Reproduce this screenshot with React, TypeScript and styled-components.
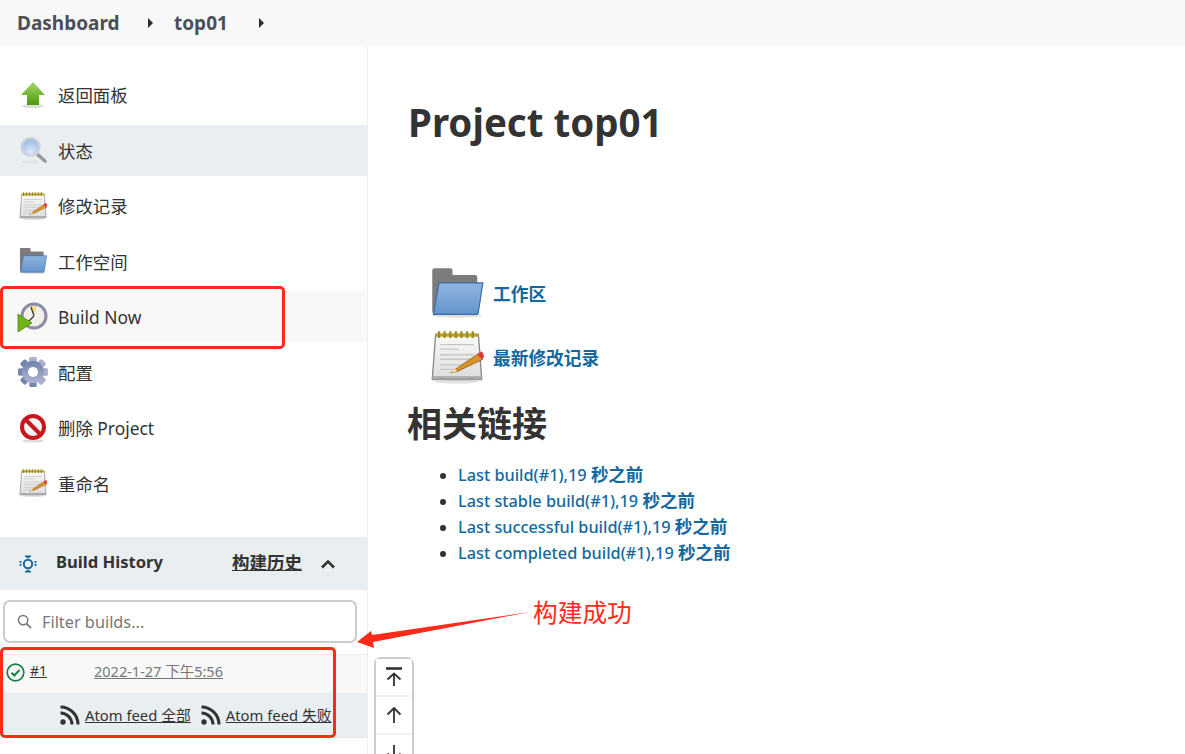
import React from "react";
import styled, { createGlobalStyle } from "styled-components";

const GlobalStyle = createGlobalStyle`
  html, body {
    margin: 0;
    padding: 0;
    height: 754px;
    overflow: hidden;
    background: #fff;
    font-family: "Noto Sans", "Noto Sans CJK SC", sans-serif;
    color: #333;
  }
`;

const Page = styled.div`
  position: relative;
  width: 1185px;
  height: 754px;
  overflow: hidden;
`;

const Breadcrumb = styled.header`
  display: flex;
  align-items: center;
  height: 46px;
  padding-left: 17px;
  background: #f8f8f8;
`;

const Crumb = styled.a<{ $width: number }>`
  width: ${({ $width }) => $width}px;
  font-size: 19px;
  font-weight: 700;
  color: #4a4f58;
`;

const Caret = styled.span<{ $gap: number }>`
  width: 0;
  height: 0;
  margin-right: ${({ $gap }) => $gap}px;
  border-left: 5px solid #2b2b2b;
  border-top: 5px solid transparent;
  border-bottom: 5px solid transparent;
`;

const Body = styled.div`
  display: flex;
  height: 708px;
`;

const Sidebar = styled.aside`
  flex: none;
  width: 367px;
  border-right: 1px solid #eee;
`;

const Tasks = styled.nav`
  display: flex;
  flex-direction: column;
  gap: 4.55px;
  padding-top: 23px;
`;

const Task = styled.a<{ $tone?: "active" | "hover" }>`
  display: flex;
  align-items: center;
  gap: 9px;
  height: 51px;
  padding-left: 17px;
  font-size: 17.4px;
  color: #333;
  background: ${({ $tone }) =>
    $tone === "active" ? "#e9eef1" : $tone === "hover" ? "#f8f8f8" : "transparent"};
`;

const HistoryHeader = styled.div`
  display: flex;
  align-items: center;
  box-sizing: border-box;
  height: 53px;
  margin-top: 28px;
  padding: 0 0 3px 19px;
  background: #e9eef1;
  & > svg {
    margin-top: 4px;
  }
`;

const HistoryTitle = styled.span`
  width: 176px;
  margin-left: 19px;
  font-size: 16.6px;
  font-weight: 700;
  color: #333;
`;

const HistoryLink = styled.a`
  width: 88px;
  font-size: 17.5px;
  font-weight: 700;
  color: #333;
  text-decoration: underline;
`;

const FilterWrap = styled.div`
  padding: 10px 10px 11px 3px;
`;

const Filter = styled.div`
  display: flex;
  align-items: center;
  gap: 10px;
  box-sizing: border-box;
  height: 43px;
  padding: 1px 0 0 12px;
  border: 2px solid #ccc;
  border-radius: 7px;
  font-size: 16.3px;
  color: #777;
`;

const BuildRow = styled.div`
  display: flex;
  align-items: center;
  height: 39px;
  padding: 0 0 6px 6px;
  border-top: 1px solid #eee;
  box-sizing: border-box;
  background: #f8f8f8;
  & > svg {
    margin-top: 4px;
  }
`;

const BuildNumber = styled.a`
  width: 64px;
  margin-left: 5px;
  font-size: 14px;
  color: #333;
  text-decoration: underline;
`;

const BuildDate = styled.a`
  font-size: 14.5px;
  color: #777;
  text-decoration: underline;
`;

const FeedRow = styled.div`
  display: flex;
  align-items: center;
  height: 45px;
  padding-left: 60px;
  box-sizing: border-box;
  background: #e9eef1;
  border-bottom: 1px solid #e4e4e4;
`;

const FeedLink = styled.a`
  margin: 0 10px 0 5px;
  font-size: 14.8px;
  color: #333;
  text-decoration: underline;
  white-space: nowrap;
`;

const Main = styled.main`
  flex: 1;
  padding-left: 6px;
`;

const Content = styled.div`
  height: 611px;
  padding-left: 34px;
`;

const Title = styled.h1`
  margin: 0;
  padding-top: 49px;
  height: 183px;
  box-sizing: border-box;
  font-size: 38.5px;
  line-height: 54px;
  font-weight: 700;
  color: #333;
`;

const Shortcuts = styled.div`
  display: flex;
  flex-direction: column;
  gap: 10px;
  padding: 37px 0 0 22px;
`;

const Shortcut = styled.a`
  display: flex;
  align-items: center;
  gap: 9px;
  height: 54px;
  font-size: 17.7px;
  font-weight: 700;
  color: #13689f;
`;

const SectionTitle = styled.h2`
  margin: 18px 0 16px -1px;
  font-size: 35px;
  line-height: 44px;
  font-weight: 700;
  color: #333;
`;

const Links = styled.ul`
  margin: 0;
  padding-left: 50px;
  font-size: 16.3px;
  line-height: 26px;
  color: #13689f;
`;

const LinkItem = styled.li`
  height: 26px;
  font-weight: 500;
  color: #333;
  & > a {
    color: #13689f;
  }
  & b {
    font-size: 17.5px;
    line-height: 1;
    font-weight: 700;
  }
`;

const ScrollNav = styled.div`
  display: flex;
  flex-direction: column;
  box-sizing: border-box;
  width: 40px;
  height: 130px;
  border: 2px solid #ccc;
  border-radius: 7px;
`;

const ScrollButton = styled.button`
  display: flex;
  align-items: center;
  justify-content: center;
  flex: none;
  height: 38px;
  padding: 0;
  background: #fff;
  border: none;
  border-bottom: 2px solid #f1f1f1;
`;

const Highlight = styled.div<{ $x: number; $y: number; $w: number; $h: number }>`
  position: absolute;
  left: ${({ $x }) => $x}px;
  top: ${({ $y }) => $y}px;
  width: ${({ $w }) => $w}px;
  height: ${({ $h }) => $h}px;
  box-sizing: border-box;
  border: 3px solid #ff2a1a;
  border-radius: 5px;
`;

const Annotation = styled.span`
  position: absolute;
  left: 533px;
  top: 595px;
  font-size: 24.7px;
  line-height: 36px;
  color: #ff2a1a;
`;

const ArrowLayer = styled.svg`
  position: absolute;
  left: 350px;
  top: 600px;
`;

const BackIcon = () => (
  <svg width="32" height="32" viewBox="0 0 32 32">
    <defs>
      <linearGradient id="backFill" x1="0" y1="0" x2="0" y2="1">
        <stop offset="0" stopColor="#a6d86e" />
        <stop offset="1" stopColor="#4e9a06" />
      </linearGradient>
    </defs>
    <ellipse cx="16" cy="27" rx="11" ry="2" fill="#ddd" />
    <path d="M16 3 L28 16 H22 V26 H10 V16 H4 Z" fill="url(#backFill)" />
  </svg>
);

const SearchIcon = () => (
  <svg width="32" height="32" viewBox="0 0 32 32">
    <defs>
      <radialGradient id="lensFill" cx="0.5" cy="0.75" r="0.8">
        <stop offset="0" stopColor="#dbe8f8" />
        <stop offset="1" stopColor="#8fb3e2" />
      </radialGradient>
    </defs>
    <ellipse cx="13" cy="28" rx="9" ry="1.8" fill="#dfe3e6" />
    <path d="M20 20 L28 27" stroke="#9a9a9a" strokeWidth="3.6" strokeLinecap="round" />
    <circle cx="13.5" cy="13" r="9" fill="url(#lensFill)" stroke="#d2d2d6" strokeWidth="2.2" />
  </svg>
);

const NotepadIcon = ({ size, id, inset = 0 }: { size: number; id: string; inset?: number }) => (
  <svg width={size} height={size} viewBox={`${-inset} ${-inset} ${48 + inset * 2} ${48 + inset * 2}`}>
    <defs>
      <linearGradient id={id} x1="0" y1="0" x2="0" y2="1">
        <stop offset="0" stopColor="#fafafa" />
        <stop offset="1" stopColor="#dcdcdc" />
      </linearGradient>
    </defs>
    <ellipse cx="24" cy="46" rx="20" ry="1.6" fill="#e2e2e2" />
    <path d="M5 4 H43 L46 44 H2 Z" fill={`url(#${id})`} stroke="#8a8a8a" strokeWidth="1.2" strokeLinejoin="round" />
    <path d="M2 41 H46 V44 H2 Z" fill="#a8a8a8" />
    <path d="M5 3 H43 V6 H5 Z" fill="#b9a32b" />
    <path d="M8 1 V7 M13 1 V7 M18 1 V7 M23 1 V7 M28 1 V7 M33 1 V7 M38 1 V7" stroke="#a08c1a" strokeWidth="2" />
    <path d="M9 13 H39 M9 17 H26 M9 22 H39 M9 26 H36 M9 31 H30 M9 35 H28" stroke="#c6c6c6" strokeWidth="1.3" />
    <path d="M18 38 L43 21 L47 26 L24 37 Z" fill="#d9942b" stroke="#8f5a10" strokeWidth="0.7" />
    <path d="M18 38 L22 33.5 L24 37 Z" fill="#f0d9a8" />
    <path d="M42 22 L45 19 C47 19 48 22 48 24 L46 26 Z" fill="#e03b3b" />
  </svg>
);

const FolderIcon = ({ size, id, inset = 0 }: { size: number; id: string; inset?: number }) => (
  <svg width={size} height={size} viewBox={`${-inset} ${-inset} ${48 + inset * 2} ${48 + inset * 2}`}>
    <defs>
      <linearGradient id={id} x1="0" y1="0" x2="0" y2="1">
        <stop offset="0" stopColor="#8fb5e0" />
        <stop offset="1" stopColor="#6494cc" />
      </linearGradient>
    </defs>
    <ellipse cx="24" cy="44" rx="22" ry="2" fill="#e0e0e0" />
    <path d="M2 4 Q2 2 4 2 H18 Q20 2 20 4 V8 H40 Q42 8 42 10 V16 H9 L3 42 Q2 42 2 40 Z" fill="#7c7c7c" />
    <path d="M8 15 H47 L43 41 Q43 43 41 43 H3 Z" fill={`url(#${id})`} stroke="#3a6aa8" strokeWidth="1" strokeLinejoin="round" />
  </svg>
);

const BuildIcon = () => (
  <svg width="32" height="32" viewBox="0 0 32 32">
    <circle cx="17" cy="15" r="13.5" fill="#8d89a6" />
    <circle cx="17" cy="15" r="10.5" fill="#f2f0ea" />
    <path d="M17 15 L13 6 A10 10 0 0 1 20 5.5 Z" fill="#f0d98c" />
    <path d="M17 15 L14 6 M17 15 L11 21" stroke="#333" strokeWidth="1.2" />
    <path d="M1 13 L15 22 L1 31 Z" fill="#6fb512" stroke="#4e8a0a" strokeWidth="0.8" />
  </svg>
);

const GearIcon = () => (
  <svg width="32" height="32" viewBox="0 0 32 32">
    <defs>
      <linearGradient id="gearFill" x1="0" y1="0" x2="0" y2="1">
        <stop offset="0" stopColor="#6d82ac" />
        <stop offset="1" stopColor="#b4b4d0" />
      </linearGradient>
    </defs>
    <g fill="url(#gearFill)">
      {[0, 45, 90, 135, 180, 225, 270, 315].map((angle) => (
        <rect key={angle} x="12.5" y="1" width="7" height="30" rx="1.5" transform={`rotate(${angle} 16 16)`} />
      ))}
      <circle cx="16" cy="16" r="11" />
    </g>
    <circle cx="16" cy="16" r="5" fill="#fff" />
  </svg>
);

const DeleteIcon = () => (
  <svg width="32" height="32" viewBox="0 0 32 32">
    <ellipse cx="16" cy="29" rx="11" ry="1.6" fill="#ddd" />
    <circle cx="16" cy="15" r="11" fill="#f4f4f4" stroke="#c8161d" strokeWidth="4" />
    <path d="M8.5 7.5 L23.5 22.5" stroke="#c8161d" strokeWidth="4" />
  </svg>
);

const HistoryIcon = () => (
  <svg width="18" height="20" viewBox="0 0 18 20" fill="none">
    <circle cx="9" cy="10" r="4.2" stroke="#13689f" strokeWidth="2" />
    <path d="M6 2 H12 L9 4 Z M6 18 H12 L9 16 Z" fill="#13689f" stroke="#13689f" />
    <path d="M1.5 7 V13 M16.5 7 V13" stroke="#13689f" strokeWidth="1.8" strokeDasharray="2 1" />
  </svg>
);

const Chevron = () => (
  <svg width="16" height="10" viewBox="0 0 16 10" fill="none">
    <path d="M2 8.5 L8 2.5 L14 8.5" stroke="#333" strokeWidth="2.6" />
  </svg>
);

const MagnifierIcon = () => (
  <svg width="15" height="15" viewBox="0 0 16 16" fill="none">
    <circle cx="6.5" cy="6.5" r="5" stroke="#777" strokeWidth="1.6" />
    <path d="M10.2 10.2 L15 15" stroke="#777" strokeWidth="1.8" />
  </svg>
);

const SuccessIcon = () => (
  <svg width="19" height="19" viewBox="0 0 19 19" fill="none">
    <circle cx="9.5" cy="9.5" r="8.3" stroke="#138347" strokeWidth="1.7" />
    <path d="M5.5 9.8 L8.3 12.5 L13.5 7" stroke="#138347" strokeWidth="2" />
  </svg>
);

const RssIcon = () => (
  <svg width="20" height="20" viewBox="0 0 20 20" fill="none">
    <circle cx="3" cy="17" r="2.7" fill="#333" />
    <path d="M0.5 8 A11.5 11.5 0 0 1 12 19.5" stroke="#333" strokeWidth="3" />
    <path d="M0.5 2 A17.5 17.5 0 0 1 18 19.5" stroke="#333" strokeWidth="3" />
  </svg>
);

const TopIcon = () => (
  <svg width="20" height="20" viewBox="0 0 20 20" fill="none">
    <path d="M2 1.5 H18" stroke="#333" strokeWidth="2.6" />
    <path d="M10 19 V7 M3.5 12.5 L10 6.5 L16.5 12.5" stroke="#333" strokeWidth="1.8" />
  </svg>
);

const UpIcon = () => (
  <svg width="20" height="20" viewBox="0 0 20 20" fill="none">
    <path d="M10 18 V3 M3.5 9.5 L10 3 L16.5 9.5" stroke="#333" strokeWidth="1.8" />
  </svg>
);

const DownIcon = () => (
  <svg width="20" height="20" viewBox="0 0 20 20" fill="none">
    <path d="M10 2 V17 M3.5 10.5 L10 17 L16.5 10.5" stroke="#333" strokeWidth="1.8" />
  </svg>
);

const links = ["Last build", "Last stable build", "Last successful build", "Last completed build"];

export default function App() {
  return (
    <Page>
      <GlobalStyle />
      <Breadcrumb>
        <Crumb $width={131}>Dashboard</Crumb>
        <Caret $gap={21} />
        <Crumb $width={85}>top01</Crumb>
        <Caret $gap={0} />
      </Breadcrumb>
      <Body>
        <Sidebar>
          <Tasks>
            <Task><BackIcon />返回面板</Task>
            <Task $tone="active"><SearchIcon />状态</Task>
            <Task><NotepadIcon size={32} id="noteA" inset={3} />修改记录</Task>
            <Task><FolderIcon size={32} id="folderA" inset={3} />工作空间</Task>
            <Task $tone="hover"><BuildIcon />Build Now</Task>
            <Task><GearIcon />配置</Task>
            <Task><DeleteIcon />删除 Project</Task>
            <Task><NotepadIcon size={32} id="noteB" inset={3} />重命名</Task>
          </Tasks>
          <HistoryHeader>
            <HistoryIcon />
            <HistoryTitle>Build History</HistoryTitle>
            <HistoryLink>构建历史</HistoryLink>
            <Chevron />
          </HistoryHeader>
          <FilterWrap>
            <Filter><MagnifierIcon />Filter builds...</Filter>
          </FilterWrap>
          <BuildRow>
            <SuccessIcon />
            <BuildNumber>#1</BuildNumber>
            <BuildDate>2022-1-27 下午5:56</BuildDate>
          </BuildRow>
          <FeedRow>
            <RssIcon />
            <FeedLink>Atom feed 全部</FeedLink>
            <RssIcon />
            <FeedLink>Atom feed 失败</FeedLink>
          </FeedRow>
        </Sidebar>
        <Main>
          <Content>
            <Title>Project top01</Title>
            <Shortcuts>
              <Shortcut><FolderIcon size={54} id="folderB" />工作区</Shortcut>
              <Shortcut><NotepadIcon size={54} id="noteC" />最新修改记录</Shortcut>
            </Shortcuts>
            <SectionTitle>相关链接</SectionTitle>
            <Links>
              {links.map((label) => (
                <LinkItem key={label}>
                  <a>{label}(#1),19 <b>秒之前</b></a>
                </LinkItem>
              ))}
            </Links>
          </Content>
          <ScrollNav>
            <ScrollButton><TopIcon /></ScrollButton>
            <ScrollButton><UpIcon /></ScrollButton>
            <ScrollButton><DownIcon /></ScrollButton>
          </ScrollNav>
        </Main>
      </Body>
      <Highlight $x={0} $y={286} $w={285} $h={63} />
      <Highlight $x={0} $y={647} $w={336} $h={91} />
      <ArrowLayer width="190" height="60">
        <path d="M180 12 L22 35 L21 31 L7 42 L24 48 L23 42 Z" fill="#ff2a1a" />
      </ArrowLayer>
      <Annotation>构建成功</Annotation>
    </Page>
  );
}
